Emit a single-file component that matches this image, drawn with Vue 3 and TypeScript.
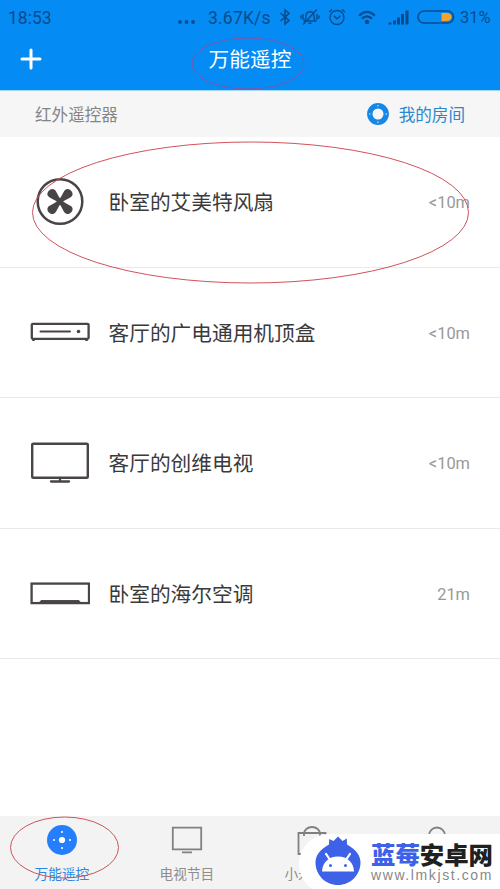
<script setup lang="ts">
type DeviceKind = 'fan' | 'box' | 'tv' | 'ac'

interface Device {
  kind: DeviceKind
  name: string
  distance: string
}

interface Tab {
  id: 'remote' | 'program' | 'shop' | 'me'
  label: string
}

const devices: Device[] = [
  { kind: 'fan', name: '卧室的艾美特风扇', distance: '<10m' },
  { kind: 'box', name: '客厅的广电通用机顶盒', distance: '<10m' },
  { kind: 'tv', name: '客厅的创维电视', distance: '<10m' },
  { kind: 'ac', name: '卧室的海尔空调', distance: '21m' },
]

const tabs: Tab[] = [
  { id: 'remote', label: '万能遥控' },
  { id: 'program', label: '电视节目' },
  { id: 'shop', label: '小米' },
  { id: 'me', label: '' },
]
</script>

<template>
  <div class="screen">
    <header class="header">
      <div class="status">
        <span class="clock">18:53</span>
        <svg class="dots" width="17" height="4" viewBox="0 0 17 4">
          <circle cx="2" cy="2" r="1.9" /><circle cx="8.5" cy="2" r="1.9" /><circle cx="15" cy="2" r="1.9" />
        </svg>
        <span class="speed">3.67K/s</span>
        <svg class="bluetooth" width="12" height="18" viewBox="0 0 12 18">
          <path d="M1.5 5 L10 12.5 L6 16 V2 L10 5.5 L1.5 13" />
        </svg>
        <svg class="mute" width="20" height="18" viewBox="0 0 20 18">
          <path d="M4.5 13 C6.5 11 5.6 8 6.3 6 C7.4 3 12.6 3 13.7 6 C14.4 8 13.5 11 15.5 13 Z M8.5 15.3 H11.5 M16.8 1.5 L3.2 16.5 M3 6 V12 M1 7.5 V10.5 M17 6 V12 M19 7.5 V10.5" />
        </svg>
        <svg class="alarm" width="18" height="18" viewBox="0 0 18 18">
          <circle cx="9" cy="9.5" r="7" />
          <path d="M5.8 7.8 L9 10.8 L12.5 7.8 M1.2 4 L4 1.4 M14 1.4 L16.8 4" />
        </svg>
        <svg class="wifi" width="18" height="15" viewBox="0 0 18 15">
          <path d="M1.2 5.6 Q9 -2 16.8 5.6 M4 8.6 Q9 4 14 8.6" />
          <circle cx="9" cy="12" r="2.2" />
        </svg>
        <svg class="signal" width="21" height="15" viewBox="0 0 21 15">
          <path d="M0.5 12.5h3v2h-3zM5 10.5h3v4h-3zM9 7.5h3v7h-3zM13 4h3v10.5h-3zM17.5 0.5h3v14h-3z" />
        </svg>
        <svg class="battery" width="38" height="14" viewBox="0 0 38 14">
          <rect class="shell" x="1" y="1" width="35.5" height="12" rx="6" />
          <path class="charge" d="M24.5 3 H30 Q34.5 3.5 34.5 7 Q34.5 10.5 30 11 H24.5 Z" />
        </svg>
        <span class="percent">31%</span>
      </div>
      <div class="titlebar">
        <svg class="plus" width="22" height="22" viewBox="0 0 22 22"><path d="M11 2 V20 M2 11 H20" /></svg>
        <h1 class="title">万能遥控</h1>
      </div>
    </header>

    <section class="subhead">
      <span>红外遥控器</span>
      <span class="room">
        <svg width="22" height="22" viewBox="0 0 22 22">
          <circle cx="11" cy="11" r="8.2" fill="none" stroke="#1687e5" stroke-width="5.4" />
          <g fill="#c5e4ff">
            <circle cx="11" cy="2.8" r=".8" /><circle cx="11" cy="19.2" r=".8" />
            <circle cx="2.8" cy="11" r=".8" /><circle cx="19.2" cy="11" r=".8" />
          </g>
        </svg>
        <span>我的房间</span>
      </span>
    </section>

    <main class="list">
      <div v-for="device in devices" :key="device.name" class="row">
        <div class="icon">
          <svg v-if="device.kind === 'fan'" width="60" height="50" viewBox="0 0 60 50">
            <circle cx="30" cy="24.5" r="22.3" fill="none" stroke="#494446" stroke-width="2.5" />
            <g fill="#494446">
              <path v-for="angle in [45, 135, 225, 315]" :key="angle" :transform="`rotate(${angle} 30 24.5)`" d="M27.8 26 C28.3 20 25.4 16 25.4 12.8 C25.4 7.6 34.6 7.6 34.6 12.8 C34.6 16 31.7 20 32.2 26 Z" />
            </g>
          </svg>
          <svg v-else-if="device.kind === 'box'" width="60" height="20" viewBox="0 0 60 20">
            <rect x="1.8" y="1.8" width="56.8" height="15" rx="1" fill="none" stroke="#494446" stroke-width="2.3" />
            <path d="M3.5 17 V19 M56.5 17 V19" stroke="#494446" stroke-width="2.5" />
            <path d="M10.5 9.5 H40" stroke="#494446" stroke-width="2" stroke-linecap="round" />
            <circle cx="48.5" cy="9.5" r="1.8" fill="#494446" />
          </svg>
          <svg v-else-if="device.kind === 'tv'" width="60" height="42" viewBox="0 0 60 42">
            <rect x="2.2" y="1.8" width="55.6" height="34" rx="1" fill="none" stroke="#494446" stroke-width="2.4" />
            <path d="M30 36 V39.5 M21 39.5 H39" fill="none" stroke="#494446" stroke-width="2.3" stroke-linecap="round" />
          </svg>
          <svg v-else width="60" height="24" viewBox="0 0 60 24">
            <rect x="1.6" y="1.6" width="57.4" height="19.5" fill="none" stroke="#494446" stroke-width="2.3" />
            <path d="M9.5 20.5 L11 18.6 H49 L50.5 20.5 Z" fill="#494446" stroke="#494446" />
          </svg>
        </div>
        <span class="name">{{ device.name }}</span>
        <span class="distance">{{ device.distance }}</span>
      </div>
    </main>

    <nav class="tabs">
      <div v-for="tab in tabs" :key="tab.id" class="tab" :class="{ active: tab.id === 'remote' }">
        <svg v-if="tab.id === 'remote'" width="32" height="32" viewBox="0 0 32 32">
          <circle cx="16" cy="16" r="15" fill="#257ffc" />
          <g fill="#fff">
            <circle cx="16" cy="16" r="3.1" /><circle cx="16" cy="8" r="1" /><circle cx="16" cy="24" r="1" />
            <circle cx="8" cy="16" r="1" /><circle cx="24" cy="16" r="1" />
          </g>
        </svg>
        <svg v-else-if="tab.id === 'program'" width="32" height="32" viewBox="0 0 32 32">
          <path d="M1.8 3.6 H30.2 V25.4 H1.8 Z M11 28.4 H21" fill="none" stroke="#808080" stroke-width="1.8" />
        </svg>
        <svg v-else-if="tab.id === 'shop'" width="32" height="32" viewBox="0 0 32 32">
          <path d="M2.5 9 H29.5 V30 H2.5 Z M8 12 V10 A8 7 0 0 1 24 10 V12" fill="none" stroke="#808080" stroke-width="1.8" />
        </svg>
        <svg v-else width="32" height="32" viewBox="0 0 32 32">
          <path d="M2 31 Q4 20 16 20 Q28 20 30 31" fill="none" stroke="#808080" stroke-width="1.8" />
          <circle cx="16" cy="11.5" r="8" fill="none" stroke="#808080" stroke-width="1.8" />
        </svg>
        <span>{{ tab.label }}</span>
      </div>
    </nav>

    <svg class="marks" width="500" height="889" viewBox="0 0 500 889">
      <ellipse cx="248" cy="63.5" rx="56" ry="25.5" stroke="#8154ae" />
      <ellipse cx="250.5" cy="212.5" rx="218" ry="70.5" />
      <ellipse cx="64.5" cy="847.5" rx="54" ry="30.5" />
    </svg>

    <aside class="brand">
      <svg class="logo" width="46" height="50" viewBox="0 0 46 50">
        <path d="M23 49 C10.5 49 .5 39 .5 26.5 C.5 19.5 5 13.5 14 8.5 L14.2 3 L18.5 5 L23 .5 L27.5 5 L31.8 2.5 L32 8.5 C41 13.5 45.5 19.5 45.5 26.5 C45.5 39 35.5 49 23 49 Z" fill="#3d62e8" />
        <path d="M7 35.5 C7.5 26.5 13.5 20.5 23 20.5 C32.5 20.5 38.5 26.5 39 35.5 Z" fill="#fff" />
        <path d="M14.5 23 L11 17.8 M31.5 23 L35 17.8" stroke="#fff" stroke-width="2.2" stroke-linecap="round" />
        <circle cx="15.5" cy="29.5" r="1.5" fill="#3d62e8" /><circle cx="30.5" cy="29.5" r="1.5" fill="#3d62e8" />
      </svg>
      <div class="brand-text">
        <div class="brand-name"><span class="blue">蓝莓</span>安卓网</div>
        <div class="brand-url">www.lmkjst.com</div>
      </div>
    </aside>
  </div>
</template>

<style>
body {
  margin: 0;
}
</style>

<style scoped>
.screen {
  position: relative;
  display: flex;
  flex-direction: column;
  width: 500px;
  height: 889px;
  overflow: hidden;
  background: #fff;
  font-family: Roboto, "Noto Sans CJK SC", sans-serif;
}
svg {
  display: block;
  flex: none;
}
.header {
  height: 90px;
  background: #048bf4;
  border-bottom: 1px solid #a0d7ff;
}
.status {
  display: flex;
  align-items: center;
  height: 34px;
  padding-left: 8px;
  color: #0a4b8c;
  font-size: 17.5px;
  line-height: 34px;
  white-space: nowrap;
}
.status > span {
  padding-top: 2px;
}
.clock {
  width: 170px;
}
.dots {
  fill: #0a4b8c;
  margin-top: 9px;
}
.speed {
  width: 63px;
  margin-left: 13px;
  letter-spacing: .2px;
}
.bluetooth,
.mute,
.alarm,
.wifi {
  fill: none;
  stroke: #0a4b8c;
  stroke-width: 1.6;
}
.bluetooth {
  margin-left: 8px;
}
.mute {
  margin-left: 9px;
  stroke-width: 1.4;
}
.alarm {
  margin-left: 8px;
  stroke-width: 1.4;
}
.wifi {
  margin-left: 12px;
  stroke-width: 2.2;
}
.wifi circle {
  fill: #0a4b8c;
  stroke: none;
}
.signal {
  margin-left: 12px;
  fill: #0a4b8c;
}
.battery {
  margin-left: 8px;
}
.shell {
  fill: none;
  stroke: #0a4b8c;
  stroke-width: 1.6;
}
.charge {
  fill: #f8a22c;
}
.percent {
  margin-left: 5px;
  font-size: 16.5px;
}
.titlebar {
  display: grid;
  grid-template-columns: 100px 300px 100px;
  align-items: center;
  height: 50px;
}
.plus {
  margin-left: 20px;
  fill: none;
  stroke: #fff;
  stroke-width: 3;
  stroke-linecap: round;
}
.title {
  margin: 0;
  padding-top: 3px;
  color: #fff;
  font-size: 20.7px;
  font-weight: 400;
  line-height: 47px;
  text-align: center;
}
.subhead {
  display: flex;
  justify-content: space-between;
  align-items: center;
  height: 46px;
  padding: 0 35px;
  background: #f6f6f6;
  color: #858585;
  font-size: 16.6px;
}
.room {
  display: flex;
  align-items: center;
  gap: 10px;
  color: #2b87d0;
}
.row {
  display: flex;
  align-items: center;
  height: 129.6px;
  padding: 0 30px;
  border-bottom: 1px solid #e9e9e9;
}
.icon {
  display: flex;
  align-items: center;
  width: 78.5px;
}
.name {
  flex: 1;
  padding-top: 3px;
  color: #3a3a3a;
  font-size: 20.7px;
  line-height: 30px;
}
.distance {
  padding-top: 2px;
  color: #999;
  font-size: 16.4px;
}
.tabs {
  display: grid;
  grid-template-columns: repeat(4, 125px);
  height: 73px;
  margin-top: auto;
  background: #f3f3f3;
}
.tab {
  display: flex;
  flex-direction: column;
  align-items: center;
  padding: 8px 1px 0 0;
  color: #8e8e8e;
  font-size: 13.7px;
  line-height: 20px;
}
.tab span {
  width: 55px;
  margin-top: 8px;
}
.tab.active {
  color: #2889e4;
}
.marks {
  position: absolute;
  inset: 0;
  fill: none;
  stroke: #d1525b;
  stroke-width: 1;
  pointer-events: none;
}
.brand {
  position: absolute;
  top: 834px;
  left: 299px;
  display: flex;
  box-sizing: border-box;
  width: 210px;
  height: 60px;
  padding: 2px 0 0 16px;
  border-radius: 30px 0 0 30px;
  background: #fff;
}
.brand-text {
  margin-left: 10px;
  white-space: nowrap;
}
.brand-name {
  margin-top: 5px;
  color: #202020;
  font-family: "Noto Sans CJK SC", sans-serif;
  font-size: 24.4px;
  font-weight: 900;
  line-height: 26px;
}
.blue {
  color: #3d62e8;
}
.brand-url {
  color: #888;
  font-family: "Liberation Sans", sans-serif;
  font-size: 14px;
  letter-spacing: 1.6px;
  line-height: 16px;
}
</style>
